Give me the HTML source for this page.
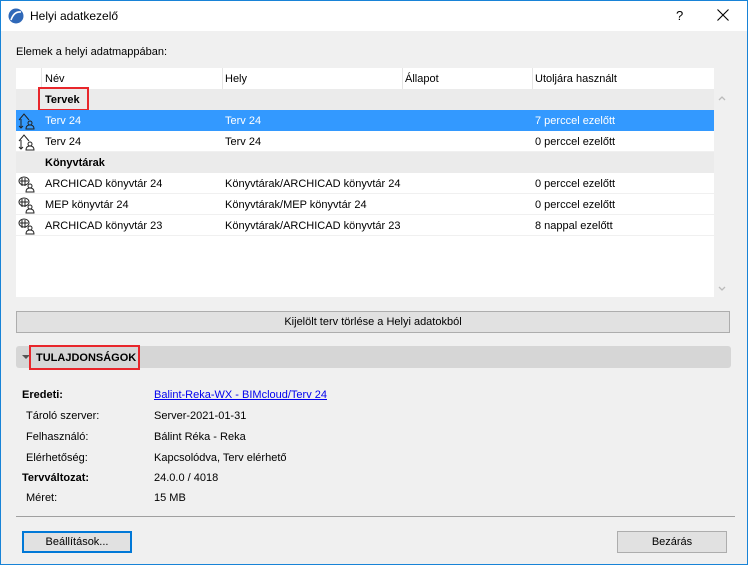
<!DOCTYPE html>
<html><head><meta charset="utf-8"><style>
*{margin:0;padding:0;box-sizing:border-box}
body{width:748px;height:565px;background:#f0f0f0;font-family:"Liberation Sans",sans-serif;font-size:11px;color:#000;position:relative;overflow:hidden}
.a{position:absolute;white-space:nowrap}
.win{position:absolute;left:0;top:0;width:748px;height:565px;border:1px solid #1883d7}
.title{position:absolute;left:1px;top:1px;width:746px;height:30px;background:#fff}
.row{position:absolute;left:16px;width:698px;height:21px;line-height:23px}
.row span{position:absolute}
.grp{background:#ebebeb;font-weight:bold}
.sel{background:#3399ff;color:#fff}
.sep{border-bottom:1px solid #f0f0f0}
</style></head><body>
<div class="win"></div>
<div class="title"></div>
<svg class="a" style="left:8px;top:8px" width="16" height="16"><circle cx="8" cy="8" r="7.5" fill="#2f68b8"/><path d="M3 12 Q6 3 13 4" stroke="#fff" stroke-width="1.6" fill="none"/></svg>
<div class="a" style="left:30px;top:9px;font-size:12px">Helyi adatkezelő</div>
<div class="a" style="left:676px;top:8px;font-size:13px">?</div>
<svg class="a" style="left:717px;top:9px" width="12" height="12"><path d="M0.5 0.5L11.5 11.5M11.5 0.5L0.5 11.5" stroke="#000" stroke-width="1.1"/></svg>
<div class="a" style="left:16px;top:46px">Elemek a helyi adatmappában:</div>
<div class="a" style="left:16px;top:68px;width:698px;height:229px;background:#fff"></div>
<div class="a" style="left:714px;top:89px;width:17px;height:208px;background:#f0f0f0"></div>
<svg class="a" style="left:718px;top:95px" width="8" height="6"><path d="M1 5L4 2L7 5" stroke="#bbb" stroke-width="1.3" fill="none"/></svg>
<svg class="a" style="left:718px;top:286px" width="8" height="6"><path d="M1 1L4 4L7 1" stroke="#bbb" stroke-width="1.3" fill="none"/></svg>
<div class="row" style="top:68px;background:#fff">
<span style="left:25px;top:0;height:21px;border-left:1px solid #e5e5e5"></span>
<span style="left:29px">Név</span>
<span style="left:206px;top:0;height:21px;border-left:1px solid #e5e5e5"></span><span style="left:209px">Hely</span>
<span style="left:386px;top:0;height:21px;border-left:1px solid #e5e5e5"></span><span style="left:389px">Állapot</span>
<span style="left:516px;top:0;height:21px;border-left:1px solid #e5e5e5"></span><span style="left:519px">Utoljára használt</span>
</div>
<div class="row grp" style="top:89px"><span style="left:29px">Tervek</span></div>
<div class="a" style="left:38px;top:87px;width:51px;height:24px;border:2px solid #e8262b"></div>
<div class="row sel" style="top:110px"><span style="left:29px">Terv 24</span><span style="left:209px">Terv 24</span><span style="left:519px">7 perccel ezelőtt</span></div>
<div class="row sep" style="top:131px"><span style="left:29px">Terv 24</span><span style="left:209px">Terv 24</span><span style="left:519px">0 perccel ezelőtt</span></div>
<div class="row grp" style="top:152px"><span style="left:29px">Könyvtárak</span></div>
<div class="row sep" style="top:173px"><span style="left:29px">ARCHICAD könyvtár 24</span><span style="left:209px">Könyvtárak/ARCHICAD könyvtár 24</span><span style="left:519px">0 perccel ezelőtt</span></div>
<div class="row sep" style="top:194px"><span style="left:29px">MEP könyvtár 24</span><span style="left:209px">Könyvtárak/MEP könyvtár 24</span><span style="left:519px">0 perccel ezelőtt</span></div>
<div class="row sep" style="top:215px"><span style="left:29px">ARCHICAD könyvtár 23</span><span style="left:209px">Könyvtárak/ARCHICAD könyvtár 23</span><span style="left:519px">8 nappal ezelőtt</span></div>
<svg class="a" style="left:18px;top:112px" width="20" height="18"><path d="M1 8L6 2L11 8M3 7V16M1 14L3 16L5 14" stroke="#222" fill="none"/><circle cx="12" cy="11" r="2" stroke="#222" fill="none"/><path d="M8 17Q8 13 12 13Q16 13 16 17Z" stroke="#222" fill="none"/></svg>
<svg class="a" style="left:18px;top:133px" width="20" height="18"><path d="M1 8L6 2L11 8M3 7V16M1 14L3 16L5 14" stroke="#222" fill="none"/><circle cx="12" cy="11" r="2" stroke="#222" fill="none"/><path d="M8 17Q8 13 12 13Q16 13 16 17Z" stroke="#222" fill="none"/></svg>
<svg class="a" style="left:18px;top:175px" width="20" height="18"><ellipse cx="6" cy="6" rx="5" ry="4" stroke="#222" fill="none"/><path d="M4 3V11M7 3V11M2 6H10" stroke="#222"/><circle cx="12" cy="11" r="2" stroke="#222" fill="none"/><path d="M8 17Q8 13 12 13Q16 13 16 17Z" stroke="#222" fill="none"/></svg>
<svg class="a" style="left:18px;top:196px" width="20" height="18"><ellipse cx="6" cy="6" rx="5" ry="4" stroke="#222" fill="none"/><path d="M4 3V11M7 3V11M2 6H10" stroke="#222"/><circle cx="12" cy="11" r="2" stroke="#222" fill="none"/><path d="M8 17Q8 13 12 13Q16 13 16 17Z" stroke="#222" fill="none"/></svg>
<svg class="a" style="left:18px;top:217px" width="20" height="18"><ellipse cx="6" cy="6" rx="5" ry="4" stroke="#222" fill="none"/><path d="M4 3V11M7 3V11M2 6H10" stroke="#222"/><circle cx="12" cy="11" r="2" stroke="#222" fill="none"/><path d="M8 17Q8 13 12 13Q16 13 16 17Z" stroke="#222" fill="none"/></svg>
<div class="a" style="left:16px;top:311px;width:714px;height:22px;background:#e1e1e1;border:1px solid #adadad;text-align:center;line-height:21px">Kijelölt terv törlése a Helyi adatokból</div>
<div class="a" style="left:16px;top:346px;width:715px;height:22px;background:#d6d6d6;border-radius:3px"></div>
<div class="a" style="left:22px;top:355px;width:0;height:0;border-left:4px solid transparent;border-right:4px solid transparent;border-top:4px solid #555"></div>
<div class="a" style="left:29px;top:345px;width:111px;height:25px;border:2px solid #e8262b"></div>
<div class="a" style="left:36px;top:352px;font-weight:bold">TULAJDONSÁGOK</div>
<div class="a" style="left:22px;top:389px;font-weight:bold">Eredeti:</div>
<div class="a" style="left:154px;top:389px;color:#0000ee;text-decoration:underline">Balint-Reka-WX - BIMcloud/Terv 24</div>
<div class="a" style="left:26px;top:410px">Tároló szerver:</div><div class="a" style="left:154px;top:410px">Server-2021-01-31</div>
<div class="a" style="left:26px;top:431px">Felhasználó:</div><div class="a" style="left:154px;top:431px">Bálint Réka - Reka</div>
<div class="a" style="left:26px;top:452px">Elérhetőség:</div><div class="a" style="left:154px;top:452px">Kapcsolódva, Terv elérhető</div>
<div class="a" style="left:22px;top:472px;font-weight:bold">Tervváltozat:</div><div class="a" style="left:154px;top:472px">24.0.0 / 4018</div>
<div class="a" style="left:26px;top:492px">Méret:</div><div class="a" style="left:154px;top:492px">15 MB</div>
<div class="a" style="left:16px;top:516px;width:719px;border-top:1px solid #a0a0a0"></div>
<div class="a" style="left:22px;top:531px;width:110px;height:22px;background:#e1e1e1;border:2px solid #0078d7;text-align:center;line-height:19px">Beállítások...</div>
<div class="a" style="left:617px;top:531px;width:110px;height:22px;background:#e1e1e1;border:1px solid #adadad;text-align:center;line-height:21px">Bezárás</div>
</body></html>
